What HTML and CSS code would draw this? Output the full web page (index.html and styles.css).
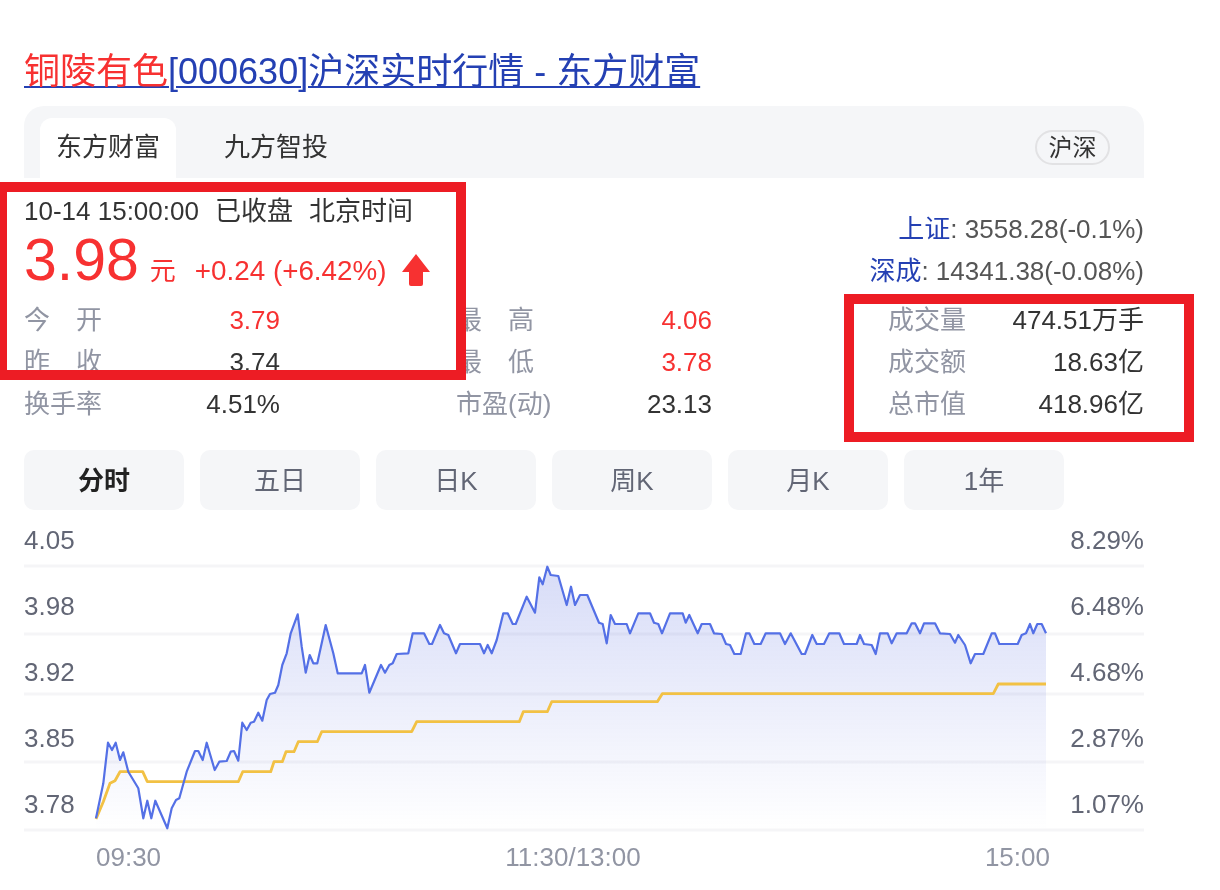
FILE: index.html
```html
<!DOCTYPE html>
<html lang="zh-CN">
<head>
<meta charset="utf-8">
<title>铜陵有色[000630]沪深实时行情 - 东方财富</title>
<link rel="stylesheet" href="styles.css">
</head>
<body>
<main class="card">
  <h1 class="title"><a href="#"><em>铜陵有色</em>[000630]沪深实时行情 - 东方财富</a></h1>

  <div class="source-bar">
    <div class="source-tab is-active">东方财富</div>
    <div class="source-tab">九方智投</div>
    <span class="market-tag">沪深</span>
  </div>

  <section class="summary">
    <div class="quote">
      <div class="quote-time"><span>10-14 15:00:00</span><span>已收盘</span><span>北京时间</span></div>
      <div class="quote-price">
        <span class="price">3.98</span>
        <span class="unit">元</span>
        <span class="change">+0.24 (+6.42%)</span>
        <svg class="arrow" width="28" height="32" viewBox="0 0 28 32"><path d="M14 0 28 18H21V30Q21 32 19 32H9Q7 32 7 30V18H0Z"/></svg>
      </div>
    </div>
    <div class="indices">
      <div><a href="#">上证</a>: 3558.28(-0.1%)</div>
      <div><a href="#">深成</a>: 14341.38(-0.08%)</div>
    </div>
  </section>

  <section class="stats">
    <div class="stat"><span class="label">今开</span><span class="value up">3.79</span></div>
    <div class="stat"><span class="label">最高</span><span class="value up">4.06</span></div>
    <div class="stat"><span class="label">成交量</span><span class="value">474.51万手</span></div>
    <div class="stat"><span class="label">昨收</span><span class="value">3.74</span></div>
    <div class="stat"><span class="label">最低</span><span class="value up">3.78</span></div>
    <div class="stat"><span class="label">成交额</span><span class="value">18.63亿</span></div>
    <div class="stat"><span class="label">换手率</span><span class="value">4.51%</span></div>
    <div class="stat"><span class="label">市盈(动)</span><span class="value">23.13</span></div>
    <div class="stat"><span class="label">总市值</span><span class="value">418.96亿</span></div>
  </section>

  <nav class="periods">
    <button class="period is-active">分时</button>
    <button class="period">五日</button>
    <button class="period">日K</button>
    <button class="period">周K</button>
    <button class="period">月K</button>
    <button class="period">1年</button>
  </nav>

  <section class="chart">
    <svg class="plot" width="1120" height="310" viewBox="24 526 1120 310">
      <defs>
        <linearGradient id="areaFill" x1="0" y1="0" x2="0" y2="1">
          <stop offset="0" stop-color="#5a6ee0" stop-opacity=".24"/>
          <stop offset="1" stop-color="#5a6ee0" stop-opacity="0"/>
        </linearGradient>
      </defs>
      <g class="grid">
        <line x1="24" x2="1144" y1="566" y2="566"/>
        <line x1="24" x2="1144" y1="634" y2="634"/>
        <line x1="24" x2="1144" y1="694" y2="694"/>
        <line x1="24" x2="1144" y1="762" y2="762"/>
        <line x1="24" x2="1144" y1="830" y2="830"/>
      </g>
      <polygon class="area" fill="url(#areaFill)" points="96,818.3 103.3,783.3 108,742.7 112,750 115.7,742.7 120,760 123.3,752.3 128.3,771.7 138.3,788.3 143.3,818.3 147.3,800.7 151.3,818.3 155.3,800.7 167.3,828.3 171.7,808.3 176,800 179.3,798.3 186.7,771.7 195,751 198.3,751 202.7,760 206.7,742.7 214.7,770 219.3,761.7 226.7,761 230.7,751.7 234,751 238.3,760.7 242.3,722.7 246.7,730 250.7,722.7 254,721.7 258.3,712.7 262.3,720.7 266.7,700 270,694 275,692.7 278.3,685 282.3,665 286.7,653.3 290.7,633.3 297.7,614.3 301.7,646.7 305.7,672.7 309.7,655 313.3,663.3 317.3,663.3 325.7,625 333.3,653.3 337.7,673.3 361.7,673.3 365,665 369.3,692.7 381,665 385,672.7 389.3,665 392.7,663.3 396.7,654 408.3,653.3 412.7,633.3 424,633.3 429.3,644 432,644 440,625 444,633.3 448.3,635 456,653.3 460,644 480,644 484,653.3 487.7,645 491.7,653.3 496.7,640 503.3,613.3 507.7,613.3 512.7,624 515.7,624 526.7,596.7 535,612.7 539.3,577.3 542.7,584.3 547.3,566.7 550.7,575 558.3,576 566.7,605 571,586.7 575,605 580,595 587.3,595 599,622.7 602.7,624 606.7,643.3 610.7,615 615,624 626.7,624 630,633.3 638.3,613.3 650,613.3 654,622.7 658.3,624 662,633.3 670,613.3 682.7,613.3 685.7,622.7 689.3,615 697.7,633.3 701.7,624 710,624 714,633.3 721.7,634 726,644 730,645 734.3,654 740.7,654 746,633.3 749.3,633.3 754.3,644 760.7,644 765.7,633.3 780,633.3 785,644 790.7,633.3 801.7,654 805,654 812.3,635 816.7,644 824,644 829.3,633.3 839.3,633.3 844,644 856.7,644 860,635 864,644 871.7,645 875.7,654 880,633.3 887.7,633.3 891.7,643.3 896.7,633.3 906.7,633.3 911.7,623.3 915,623.3 920,633.3 924,623.3 935,623.3 940,633.3 950,634 955,642.7 958.3,635 965,645 970.7,663.3 975,654 983.3,654 991.7,633.3 995,633.3 999.3,644 1017.7,644 1021.7,635 1026,633.3 1030,624 1033.3,633.3 1037.3,624 1041.7,624 1046,633.3 1046,830 96,830"/>
      <polyline class="avg-line" points="96,819 103.3,801.7 110,783.3 115,780.7 120,771.7 142.7,771.7 147.3,781.7 238.3,781.7 242.7,771.7 270.7,771.7 274,761.7 282.3,761.7 286,751.7 294,751.7 298.3,741.7 317.3,741.7 321.7,731.7 411.7,731.7 416.7,721.7 519.3,721.7 523.3,711.7 547.3,711.7 551.7,701.7 657.3,701.7 662.3,693.7 993.3,693.7 998.3,684 1046,684"/>
      <polyline class="price-line" points="96,818.3 103.3,783.3 108,742.7 112,750 115.7,742.7 120,760 123.3,752.3 128.3,771.7 138.3,788.3 143.3,818.3 147.3,800.7 151.3,818.3 155.3,800.7 167.3,828.3 171.7,808.3 176,800 179.3,798.3 186.7,771.7 195,751 198.3,751 202.7,760 206.7,742.7 214.7,770 219.3,761.7 226.7,761 230.7,751.7 234,751 238.3,760.7 242.3,722.7 246.7,730 250.7,722.7 254,721.7 258.3,712.7 262.3,720.7 266.7,700 270,694 275,692.7 278.3,685 282.3,665 286.7,653.3 290.7,633.3 297.7,614.3 301.7,646.7 305.7,672.7 309.7,655 313.3,663.3 317.3,663.3 325.7,625 333.3,653.3 337.7,673.3 361.7,673.3 365,665 369.3,692.7 381,665 385,672.7 389.3,665 392.7,663.3 396.7,654 408.3,653.3 412.7,633.3 424,633.3 429.3,644 432,644 440,625 444,633.3 448.3,635 456,653.3 460,644 480,644 484,653.3 487.7,645 491.7,653.3 496.7,640 503.3,613.3 507.7,613.3 512.7,624 515.7,624 526.7,596.7 535,612.7 539.3,577.3 542.7,584.3 547.3,566.7 550.7,575 558.3,576 566.7,605 571,586.7 575,605 580,595 587.3,595 599,622.7 602.7,624 606.7,643.3 610.7,615 615,624 626.7,624 630,633.3 638.3,613.3 650,613.3 654,622.7 658.3,624 662,633.3 670,613.3 682.7,613.3 685.7,622.7 689.3,615 697.7,633.3 701.7,624 710,624 714,633.3 721.7,634 726,644 730,645 734.3,654 740.7,654 746,633.3 749.3,633.3 754.3,644 760.7,644 765.7,633.3 780,633.3 785,644 790.7,633.3 801.7,654 805,654 812.3,635 816.7,644 824,644 829.3,633.3 839.3,633.3 844,644 856.7,644 860,635 864,644 871.7,645 875.7,654 880,633.3 887.7,633.3 891.7,643.3 896.7,633.3 906.7,633.3 911.7,623.3 915,623.3 920,633.3 924,623.3 935,623.3 940,633.3 950,634 955,642.7 958.3,635 965,645 970.7,663.3 975,654 983.3,654 991.7,633.3 995,633.3 999.3,644 1017.7,644 1021.7,635 1026,633.3 1030,624 1033.3,633.3 1037.3,624 1041.7,624 1046,633.3"/>
    </svg>
    <div class="axis axis-left"><span>4.05</span><span>3.98</span><span>3.92</span><span>3.85</span><span>3.78</span></div>
    <div class="axis axis-right"><span>8.29%</span><span>6.48%</span><span>4.68%</span><span>2.87%</span><span>1.07%</span></div>
    <div class="time-axis"><span>09:30</span><span>11:30/13:00</span><span>15:00</span></div>
  </section>
</main>

<div class="frame frame-quote"></div>
<div class="frame frame-volume"></div>
</body>
</html>
```
FILE: styles.css
```css
* { box-sizing: border-box; }

html, body {
  margin: 0;
  padding: 0;
  background: #fff;
}

body {
  position: relative;
  width: 1220px;
  height: 890px;
  overflow: hidden;
  font-family: "Liberation Sans", "Noto Sans CJK SC", sans-serif;
  font-size: 26px;
  color: #333;
}

.card {
  width: 1120px;
  margin-left: 24px;
  padding-top: 50px;
  filter: blur(.5px);
}

.title {
  margin: 0 0 12px;
  font-size: 36px;
  font-weight: 400;
  line-height: 44px;
  white-space: nowrap;
}
.title a {
  color: #2440b3;
  text-decoration: underline;
  text-decoration-thickness: 2px;
  text-underline-offset: 2px;
}
.title em { color: #f73131; font-style: normal; }

.source-bar {
  display: flex;
  align-items: flex-end;
  height: 72px;
  padding: 0 34px 0 16px;
  background: #f5f6f8;
  border-radius: 20px 20px 0 0;
}
.source-tab {
  width: 136px;
  height: 60px;
  margin-right: 32px;
  line-height: 58px;
  text-align: center;
  color: #333;
  border-radius: 12px 12px 0 0;
}
.source-tab.is-active { background: #fff; }
.market-tag {
  align-self: flex-start;
  margin-left: auto;
  margin-top: 24px;
  width: 75px;
  height: 35px;
  font-size: 24px;
  line-height: 31px;
  text-align: center;
  border: 2px solid #e2e2e4;
  border-radius: 18px;
}

.summary {
  display: flex;
  justify-content: space-between;
  height: 121px;
}
.quote { padding-top: 12px; }
.quote-time { display: flex; gap: 16px; height: 42px; line-height: 42px; }
.quote-price { display: flex; align-items: baseline; height: 66px; margin-top: -2px; color: #f73131; }
.price { font-size: 59px; line-height: 60px; margin-right: 11px; }
.unit { font-size: 26px; margin-right: 19px; }
.change { font-size: 27.8px; margin-right: 16px; }
.arrow { align-self: center; fill: #f73131; margin-top: 14px; }

.indices { padding-top: 30px; text-align: right; line-height: 42px; color: #555; }
.indices a { color: #2440b3; text-decoration: none; }

.stats {
  display: grid;
  grid-template-columns: repeat(3, 256px);
  justify-content: space-between;
}
.stat { display: flex; justify-content: space-between; height: 42px; line-height: 42px; }
.label {
  min-width: 78px;
  color: #9195a3;
  text-align-last: justify;
  white-space: nowrap;
}
.value { color: #333; white-space: nowrap; }
.value.up { color: #f73131; }

.periods { display: flex; gap: 16px; margin-top: 25px; }
.period {
  width: 160px;
  height: 60px;
  padding: 0 0 3px;
  border: 0;
  border-radius: 10px;
  background: #f5f6f8;
  font: inherit;
  color: #626675;
}
.period.is-active { font-weight: 700; color: #222; }

.chart { position: relative; height: 370px; margin-top: 10px; }
.plot { position: absolute; left: 0; top: 6px; }
.grid line { stroke: #f5f5f7; stroke-width: 3; }
.avg-line, .price-line { fill: none; stroke-linejoin: round; }
.avg-line { stroke: #f2c144; stroke-width: 2.8; }
.price-line { stroke: #5470e6; stroke-width: 2.2; }

.axis {
  position: absolute;
  top: -1px;
  display: flex;
  flex-direction: column;
  line-height: 42px;
  gap: 24px;
  color: #626675;
}
.axis-left { left: 0; }
.axis-right { right: 0; text-align: right; }

.time-axis {
  position: absolute;
  left: 72px;
  top: 316px;
  width: 954px;
  display: flex;
  justify-content: space-between;
  line-height: 42px;
  color: #9195a3;
}

.frame { position: absolute; border: 10px solid #ed1c24; }
.frame-quote { left: -3px; top: 182px; width: 469px; height: 198px; }
.frame-volume { left: 844px; top: 294px; width: 350px; height: 148px; }
```
